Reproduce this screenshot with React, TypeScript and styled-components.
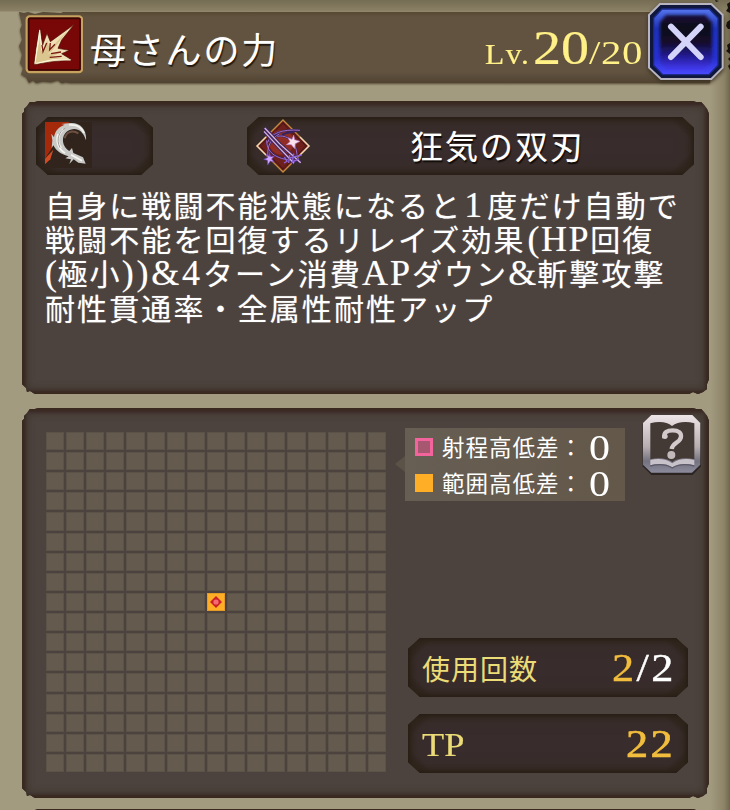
import React from 'react';
import styled, { createGlobalStyle } from 'styled-components';

const GlobalStyle = createGlobalStyle`
  * {
    box-sizing: border-box;
  }

  body {
    margin: 0;
    background: #a39b80;
    font-family: 'Noto Sans CJK JP', sans-serif;
    color: #fff;
  }
`;

interface LatinProps {
  $size: number;
  $stretch?: number;
  $spacing?: number;
  $weight?: number;
}

const Screen = styled.div`
  width: 730px;
  height: 810px;
  overflow: hidden;
  padding-top: 12px;
  background:
    linear-gradient(to bottom, #746c53 0, #8a8166 11px, transparent 12px),
    linear-gradient(to left, #6f674d 0, #8d8468 6px, transparent 20px),
    #a39b80;
`;

const HeaderArea = styled.div`
  position: relative;
  z-index: 0;
`;

const Header = styled.header`
  position: relative;
  display: flex;
  align-items: center;
  height: 71px;
  margin-left: 19px;
  padding: 0 6px 6px 6px;
`;

const HeaderPlate = styled.div`
  position: absolute;
  inset: 0 20px 0 0;
  z-index: -1;
  background: linear-gradient(to bottom, #574832 0, #615340 5px, #615340 60px, #514331 100%);
  clip-path: polygon(
    0 0, 5px 1px, 9px 0, 16px 2px, 24px 0, 42px 1px, 44px 0, 100% 0, 100% 100%, 52px 100%,
    46px 99%, 43px 101%, 39px 96%, 32px 99%, 24px 98%, 17px 100%, 14px 96%, 10px 100%,
    7px 92%, 2px 88%, 4px 79%, 1px 72%, 3px 60%, 0 48%, 3px 39%, 1px 25%, 3px 18%
  );
`;

const PlateShadow = styled.div`
  position: absolute;
  inset: 0;
  z-index: -1;
  filter: drop-shadow(0 1px 1px #51462f);
`;

/* torn edge of the page behind the close button */
const TornEdge = styled.svg`
  position: absolute;
  top: -12px;
  right: 0;
`;

const Title = styled.h1`
  margin: 6px 0 0 7px;
  font-size: 36px;
  line-height: 50px;
  font-weight: 400;
  letter-spacing: 1.8px;
  text-shadow: 1px 2px 1px #241a10, 0 0 1px rgba(255, 255, 255, 0.6);
`;

const Latin = styled.span<LatinProps>`
  display: inline-block;
  font-family: 'Liberation Serif', serif;
  font-size: ${({ $size }) => $size}px;
  line-height: 1;
  letter-spacing: ${({ $spacing = 0 }) => $spacing}px;
  transform: scaleX(${({ $stretch = 1 }) => $stretch});
  transform-origin: left;
  -webkit-text-stroke: ${({ $weight = 0 }) => $weight}px currentColor;
`;

const Level = styled.div`
  display: flex;
  align-items: baseline;
  width: 162px;
  margin-top: 6px;
  margin-left: auto;
  color: #fff087;
`;

const LevelLabel = styled.div`
  width: 48px;
`;

const LevelCurrent = styled.div`
  width: 56px;
`;

const CloseButton = styled.button`
  width: 76px;
  height: 78px;
  margin: -6px 0 0 1px;
  padding: 0;
  border: 0;
  background: none;

  svg {
    display: block;
    filter: drop-shadow(0 2px 2px #3a3122);
  }
`;

const Panel = styled.section<{ $height: number }>`
  width: 687px;
  height: ${({ $height }) => $height}px;
  margin-left: 22px;
  background: #4c433e;
  box-shadow: inset 0 0 3px 3px #39291f, inset 0 2px 3px 2px #402e2e, inset 0 0 8px 4px #3c3028;
  clip-path: polygon(
    0 13px, 2px 11px, 2px 8px, 5px 5px, 8px 1px, 13px 1px, 17px 0,
    calc(100% - 17px) 0, calc(100% - 13px) 1px, calc(100% - 8px) 1px, calc(100% - 5px) 4px,
    calc(100% - 2px) 8px, 100% 13px, 100% calc(100% - 15px),
    calc(100% - 2px) calc(100% - 10px), calc(100% - 2px) calc(100% - 5px),
    calc(100% - 6px) calc(100% - 2px), calc(100% - 11px) 100%, calc(100% - 16px) calc(100% - 2px),
    calc(100% - 20px) 100%, 13px 100%, 8px calc(100% - 3px), 5px calc(100% - 2px),
    4px calc(100% - 6px), 0 calc(100% - 10px)
  );
`;

const SkillPanel = styled(Panel)`
  margin-top: 18px;
  padding: 16px 15px 0 14px;
`;

const RangePanel = styled(Panel)`
  display: flex;
  margin-top: 14px;
  padding: 24px 0 0 24px;
`;

const NextPanel = styled(Panel)`
  margin-top: 11px;
`;

const Slot = styled.div<{ $width: number; $height: number }>`
  display: flex;
  align-items: center;
  width: ${({ $width }) => $width}px;
  height: ${({ $height }) => $height}px;
  background:
    linear-gradient(135deg, #261d14 9px, transparent 19px),
    linear-gradient(225deg, #261d14 9px, transparent 19px),
    linear-gradient(45deg, #261d14 9px, transparent 19px),
    linear-gradient(315deg, #261d14 9px, transparent 19px),
    #382d2c;
  box-shadow: inset 0 0 5px 2px #261d14, inset 0 0 13px 5px #352a21;
  clip-path: polygon(
    12px 0, calc(100% - 12px) 0, 100% 11px, 100% calc(100% - 11px),
    calc(100% - 12px) 100%, 12px 100%, 0 calc(100% - 11px), 0 11px
  );
`;

const SlotRow = styled.div`
  display: flex;
  justify-content: space-between;
`;

const TypeSlot = styled(Slot)`
  padding: 0 0 2px 9px;
`;

const NameSlot = styled(Slot)`
  padding-left: 9px;
`;

const SkillName = styled.div`
  flex: 1;
  margin: -2px 0 0 100px;
  font-size: 33px;
  line-height: 48px;
  letter-spacing: 2px;
  text-shadow: 1px 2px 1px #120c08, 0 0 1px rgba(255, 255, 255, 0.6);
`;

const Description = styled.p`
  margin: 12px 0 0 9px;
  font-size: 30px;
  line-height: 34.2px;
  letter-spacing: 2.1px;
  white-space: nowrap;
  text-shadow: 0 0 1px rgba(255, 255, 255, 0.5);
`;

const Roman = styled.span<{ $spacing?: number; $indent?: number }>`
  font-family: 'Liberation Serif', serif;
  font-size: 36px;
  line-height: 0;
  margin-left: ${({ $indent = 0 }) => $indent}px;
  letter-spacing: ${({ $spacing = 0 }) => $spacing}px;
`;

const RangeGrid = styled.div`
  display: grid;
  grid-template-columns: repeat(17, 1fr);
  grid-template-rows: repeat(17, 1fr);
  gap: 2px;
  width: 340px;
  height: 340px;
`;

const Cell = styled.div<{ $target: boolean }>`
  display: flex;
  align-items: center;
  justify-content: center;
  background: ${({ $target }) => ($target ? '#ffae25' : '#645b4e')};
  border: 1px solid ${({ $target }) => ($target ? '#e59b27' : '#5c5348')};
`;

const SidePanel = styled.div`
  flex: 1;
  display: flex;
  flex-direction: column;
  padding-left: 19px;
`;

const SideTop = styled.div`
  display: flex;
  margin-top: -4px;
`;

const Legend = styled.div`
  position: relative;
  width: 220px;
  height: 73px;
  display: flex;
  flex-direction: column;
  background: linear-gradient(to right, #675e54, #635849);

  &::before {
    content: '';
    position: absolute;
    left: -10px;
    top: 28px;
    border: solid transparent;
    border-width: 8px 10px 8px 0;
    border-right-color: #5b5248;
  }
`;

const LegendRow = styled.div`
  display: flex;
  align-items: center;
  height: 36.5px;
  padding-left: 10px;
`;

const Swatch = styled.span<{ $fill: string; $edge: string }>`
  width: 18px;
  height: 18px;
  margin-top: 1px;
  background: ${({ $fill }) => $fill};
  border: 3px solid ${({ $edge }) => $edge};
`;

const LegendLabel = styled.span`
  width: 147px;
  margin: -1px 0 0 9px;
  font-size: 22.5px;
  line-height: 30px;
  letter-spacing: 1px;
  white-space: nowrap;
`;

const LegendValue = styled.span`
  display: flex;
  margin-top: 4px;
`;

const HelpButton = styled.button`
  width: 60px;
  height: 62px;
  margin: -14px 0 0 17px;
  padding: 0;
  border: 0;
  background: none;

  svg {
    display: block;
  }
`;

const Stats = styled.div`
  display: flex;
  flex-direction: column;
  gap: 17px;
  margin: auto 0 25px 3px;
`;

const StatSlot = styled(Slot)`
  justify-content: space-between;
  padding: 0 17px 0 14px;
`;

const StatLabel = styled.span`
  color: #ecdc77;
  font-size: 28px;
  letter-spacing: 1px;
  line-height: 40px;
`;

const StatValue = styled.span`
  color: #fff;

  em {
    font-style: normal;
    color: #f2bd3d;
  }
`;

const BurstIcon = () => (
  <svg width="58" height="60" viewBox="74 44 174 180">
    <rect x="76" y="47" width="170" height="172" rx="11" fill="#54401f" />
    <rect x="79" y="48" width="166" height="167" rx="9" fill="#780707" stroke="#c5a25f" strokeWidth="7" />
    <rect x="85" y="54" width="154" height="155" rx="4" fill="none" stroke="#350805" strokeWidth="5" />
    <path
      d="M101 193 107 145 118 81 127 134 140 99 150 124 222 72 184 119 173 144 207 150 184 160 215 179 157 184Z"
      fill="#f0dfb5"
      stroke="#4b0c04"
      strokeWidth="2"
    />
    <path d="M103 191 119 116 126 158 141 120 148 146 202 91 155 151 142 160 184 155 151 170 200 179 147 179Z" fill="#dcc68f" />
    <path d="M104 189 118 90 124 150M108 189 158 178 211 179" stroke="#fff9df" strokeWidth="3" fill="none" />
    <path d="M125 134 128 154 139 128M150 128 148 148 164 132M152 160 182 155M148 171 184 168" stroke="#7a1a12" strokeWidth="4" fill="none" />
  </svg>
);

const CloseIcon = () => (
  <svg width="76" height="78" viewBox="596 8 228 234">
    <defs>
      <linearGradient id="closeFace" x1="0" y1="0" x2="0" y2="1">
        <stop offset="0" stopColor="#15123c" />
        <stop offset=".2" stopColor="#100b1c" />
        <stop offset=".5" stopColor="#120c28" />
        <stop offset=".75" stopColor="#221a90" />
        <stop offset="1" stopColor="#4238f0" />
      </linearGradient>
      <linearGradient id="closeRim" x1="0" y1="0" x2="0" y2="1">
        <stop offset="0" stopColor="#5575ee" />
        <stop offset=".3" stopColor="#1c30b8" />
        <stop offset=".75" stopColor="#2630d0" />
        <stop offset="1" stopColor="#4a48ff" />
      </linearGradient>
      <filter id="closeSoft">
        <feGaussianBlur stdDeviation="5" />
      </filter>
    </defs>
    <path d="M632 11H786L820 44V202L786 236H635L599 202V44Z" fill="#10173c" stroke="#b8b5c0" strokeWidth="6" />
    <path d="M638 26H780L806 53V195L779 223H640L613 195V53Z" fill="url(#closeRim)" stroke="#1b2a86" strokeWidth="4" />
    <path d="M650 44H768L788 66V185L765 207H653L632 185V66Z" fill="url(#closeFace)" filter="url(#closeSoft)" />
    <path d="M665 79 754 170 M754 79 665 170" stroke="#d4d4fa" strokeWidth="18" strokeLinecap="round" />
  </svg>
);

const SlashIcon = () => (
  <svg width="47" height="46" viewBox="135 368 141 138">
    <path d="M135 368H276V506H135Z" fill="#30241c" />
    <path d="M135 368H209L170 400 157 444 135 478Z" fill="#a52a0b" />
    <path d="M135 478 160 451 151 480 135 495Z" fill="#d34b20" />
    <path
      d="M205 372C240 366 261 391 258 423C248 389 223 381 200 397C183 411 185 442 208 455L216 446 220 461 249 474 257 493 235 490 221 480 208 494 213 480 196 477 206 471C184 465 169 456 160 438L155 446 157 423 154 403 162 414C165 394 176 383 194 376L184 374Z"
      fill="#c9cac7"
    />
    <path d="M191 389C173 404 170 431 184 446M207 377C231 374 245 385 252 401M174 404C167 425 174 449 195 461M213 466 246 484" stroke="#f5f4ef" strokeWidth="5" fill="none" />
    <path d="M180 445C168 421 176 397 196 386" stroke="#a19e99" strokeWidth="3" fill="none" />
    <path d="M235 402C216 390 198 399 194 417" stroke="#6e5141" strokeWidth="6" fill="none" />
  </svg>
);

const TwinBladeIcon = () => (
  <svg width="54" height="54" viewBox="79 57 162 162">
    <path d="M160 60 238 138 160 216 82 138Z" fill="#6f201b" stroke="#c48a40" strokeWidth="4" />
    <path d="M109 111 82 138 109 165 M211 111 238 138 211 165" stroke="#f0d8bd" strokeWidth="4" fill="none" />
    <path d="M160 69 229 138 160 207 91 138Z" fill="none" stroke="#3f1518" strokeWidth="4" strokeDasharray="3 2" />
    <circle cx="155" cy="127" r="37" fill="#912d24" />
    <path d="M113 128C126 99 156 87 211 91M111 121C111 162 145 180 203 182M143 109C170 104 198 121 202 164M116 174C108 139 128 112 149 102M157 104C181 93 195 98 206 89" stroke="#35235f" strokeWidth="6" fill="none" />
    <path d="M113 128C126 99 156 87 211 91M111 121C111 162 145 180 203 182M143 109C170 104 198 121 202 164M116 174C108 139 128 112 149 102" stroke="#bc78d3" strokeWidth="2.5" fill="none" />
    <path d="M105 84 150 131 213 188M103 94 148 143 193 190" stroke="#402765" strokeWidth="10" />
    <path d="M105 84 150 131 213 188M103 94 148 143 193 190" stroke="#d9b4d8" strokeWidth="4" />
    <path d="M192 105 195 119 211 124 197 131 195 146 185 134 170 134 181 125 175 113 187 118Z" fill="#fbe0ed" stroke="#b778c5" strokeWidth="2" />
    <path d="M119 157 123 170 134 168 126 177 134 187 122 183 114 195 113 181 102 178 114 173 110 163 119 169Z" fill="#d4a7ff" stroke="#6840bd" strokeWidth="2" />
    <path d="M164 171 172 184 163 189M180 165 177 189M192 161 188 187 208 176M180 174 216 165" stroke="#8b62d8" strokeWidth="4" fill="none" />
  </svg>
);

const BookIcon = () => (
  <svg width="60" height="62" viewBox="756 43 180 186">
    <defs>
      <linearGradient id="bookFrame" x1="0" y1="0" x2="0" y2="1">
        <stop offset="0" stopColor="#eee5e8" />
        <stop offset=".55" stopColor="#b7aeb0" />
        <stop offset=".8" stopColor="#74727f" />
        <stop offset="1" stopColor="#8c8b9d" />
      </linearGradient>
    </defs>
    <path d="M784 49H907L933 72V200L908 226H784L758 200V72Z" fill="#2b2421" />
    <path d="M784 46H907L931 70V195L906 219H784L759 195V70Z" fill="url(#bookFrame)" />
    <path d="M781 71C808 64 832 67 846 79C861 67 887 64 913 71V179C886 173 862 176 847 187C831 176 807 173 781 179Z" fill="#433935" />
    <path d="M781 181C807 175 831 179 847 191C862 179 887 175 913 181V197C887 190 862 193 847 203C831 193 807 190 781 197Z" fill="#c7c1ca" />
    <path d="M781 199C807 192 831 195 847 205C862 195 887 192 913 199" fill="none" stroke="#5d5a6a" strokeWidth="4" />
    <path d="M823 115C820 98 832 92 848 92C866 92 874 100 873 111C872 129 848 128 845 148" fill="none" stroke="#d2cacb" strokeWidth="13" />
    <circle cx="825" cy="110" r="8" fill="#d2cacb" />
    <circle cx="844" cy="166" r="12" fill="#c2b9bb" />
  </svg>
);

const TargetMark = () => (
  <svg width="14" height="14" viewBox="0 0 14 14">
    <path d="M7 1 13 7 7 13 1 7Z" fill="#ca2129" />
    <circle cx="7" cy="7" r="2.6" fill="#f56b73" />
  </svg>
);

const GRID_SIZE = 17;
const TARGET_INDEX = Math.floor((GRID_SIZE * GRID_SIZE) / 2);
const cells = Array.from({ length: GRID_SIZE * GRID_SIZE }, (_, i) => i);

const legend = [
  { label: '射程高低差：', value: 0, fill: '#a75870', edge: '#f2649b' },
  { label: '範囲高低差：', value: 0, fill: '#ffae25', edge: '#ffae25' },
];

const App: React.FC = () => (
  <>
    <GlobalStyle />
    <Screen>
      <HeaderArea>
        <TornEdge width="20" height="74" viewBox="0 0 20 74">
          <path d="M5 0 9 1 6 2ZM20 2 17 4 18 8 16 11 20 13ZM20 20 17 22 16 26 18 29 20 29ZM20 43 17 45 18 49 16 51 20 54ZM20 57 18 59 20 61ZM20 64 18 66 20 70Z" fill="#17140f" />
        </TornEdge>
        <Header>
          <PlateShadow><HeaderPlate /></PlateShadow>
          <BurstIcon />
          <Title>母さんの力</Title>
          <Level>
            <LevelLabel><Latin $size={30} $stretch={1.05} $spacing={1.5} $weight={0.2}>Lv.</Latin></LevelLabel>
            <LevelCurrent><Latin $size={48} $stretch={1.17} $weight={0.2}>20</Latin></LevelCurrent>
            <Latin $size={34} $stretch={1.2} $spacing={0.5}>/20</Latin>
          </Level>
          <CloseButton aria-label="閉じる"><CloseIcon /></CloseButton>
        </Header>
      </HeaderArea>

      <SkillPanel $height={293}>
        <SlotRow>
          <TypeSlot $width={117} $height={58}><SlashIcon /></TypeSlot>
          <NameSlot $width={447} $height={58}>
            <TwinBladeIcon />
            <SkillName>狂気の双刃</SkillName>
          </NameSlot>
        </SlotRow>
        <Description>
          自身に戦闘不能状態になると<Roman $spacing={5} $indent={2}>1</Roman>度だけ自動で<br />
          戦闘不能を回復するリレイズ効果<Roman $spacing={1.5} $indent={2}>(HP</Roman>回復<br />
          <Roman $spacing={0.5}>(</Roman>極小<Roman $spacing={2.8}>))&amp;4</Roman>ターン消費<Roman $spacing={2}>AP</Roman>ダウン<Roman $spacing={1}>&amp;</Roman>斬撃攻撃<br />
          耐性貫通率・全属性耐性アップ
        </Description>
      </SkillPanel>

      <RangePanel $height={390}>
        <RangeGrid>
          {cells.map(i => (
            <Cell key={i} $target={i === TARGET_INDEX}>
              {i === TARGET_INDEX && <TargetMark />}
            </Cell>
          ))}
        </RangeGrid>
        <SidePanel>
          <SideTop>
            <Legend>
              {legend.map(item => (
                <LegendRow key={item.label}>
                  <Swatch $fill={item.fill} $edge={item.edge} />
                  <LegendLabel>{item.label}</LegendLabel>
                  <LegendValue><Latin $size={35} $stretch={1.2}>{item.value}</Latin></LegendValue>
                </LegendRow>
              ))}
            </Legend>
            <HelpButton aria-label="ヘルプ"><BookIcon /></HelpButton>
          </SideTop>
          <Stats>
            <StatSlot $width={280} $height={59}>
              <StatLabel>使用回数</StatLabel>
              <StatValue><Latin $size={41} $stretch={1.08} $spacing={2.2} $weight={0.4}><em>2</em>/2</Latin></StatValue>
            </StatSlot>
            <StatSlot $width={280} $height={59}>
              <StatLabel><Latin $size={33} $stretch={1.1} $weight={0.2}>TP</Latin></StatLabel>
              <StatValue><Latin $size={41} $stretch={1.08} $spacing={2.2} $weight={0.7}><em>22</em></Latin></StatValue>
            </StatSlot>
          </Stats>
        </SidePanel>
      </RangePanel>
      <NextPanel $height={60} />
    </Screen>
  </>
);

export default App;
